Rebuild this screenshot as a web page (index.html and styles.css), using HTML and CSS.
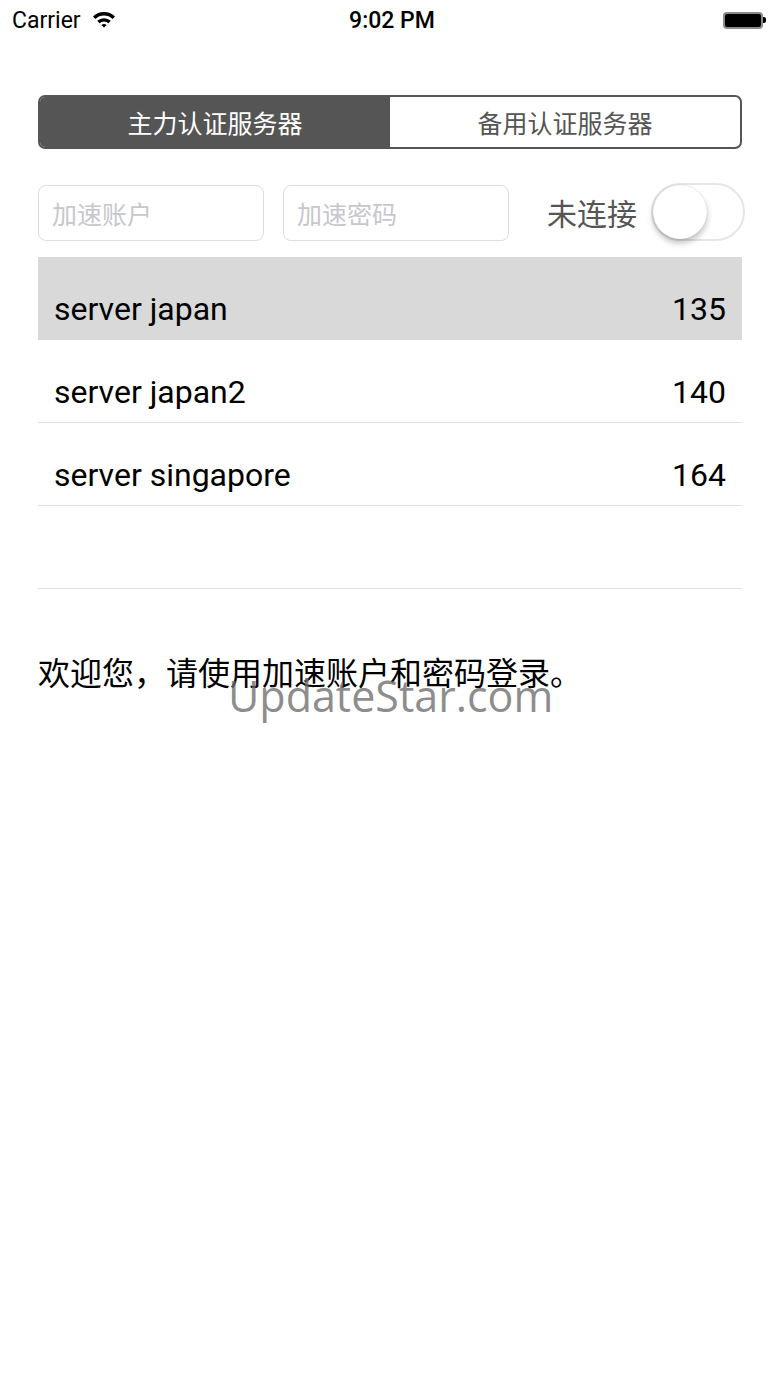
FILE: index.html
```html
<!DOCTYPE html>
<html lang="zh">
<head>
    <meta charset="UTF-8">
    <meta name="viewport" content="width=device-width, initial-scale=1.0">
    <title>加速</title>
    <link rel="stylesheet" href="styles.css">
</head>
<body>

    <div class="status-bar">
        <div class="status-left">
            <span>Carrier</span>
            <svg class="wifi" width="24" height="18" viewBox="0 0 24 18">
                <path d="M1 6.5 A16 16 0 0 1 23 6.5 L20.6 9 A12.6 12.6 0 0 0 3.4 9 Z" fill="#000"/>
                <path d="M5.2 10.8 A10 10 0 0 1 18.8 10.8 L16.4 13.2 A6.6 6.6 0 0 0 7.6 13.2 Z" fill="#000"/>
                <path d="M9.4 15 A4 4 0 0 1 14.6 15 L12 17.6 Z" fill="#000"/>
            </svg>
        </div>
        <div class="status-time">9:02 PM</div>
        <div class="status-right">
            <div class="battery"></div>
            <div class="battery-nub"></div>
        </div>
    </div>

    <div class="container">
        <div class="segmented">
            <div class="segment active">主力认证服务器</div>
            <div class="segment">备用认证服务器</div>
        </div>

        <div class="login-row">
            <input type="text" class="field" placeholder="加速账户">
            <input type="password" class="field" placeholder="加速密码">
            <span class="conn-label">未连接</span>
            <div class="switch"><div class="knob"></div></div>
        </div>

        <div class="server-list">
            <div class="server selected"><span>server japan</span><span>135</span></div>
            <div class="server"><span>server japan2</span><span>140</span></div>
            <div class="server"><span>server singapore</span><span>164</span></div>
            <div class="server empty"></div>
        </div>

        <div class="welcome-box">
            <p class="welcome">欢迎您，请使用加速账户和密码登录。</p>
            <div class="watermark">UpdateStar.com</div>
        </div>
    </div>

</body>
</html>
```

FILE: styles.css
```css
body {
    margin: 0;
    padding: 0;
    background: #fff;
    font-family: Roboto, "Noto Sans CJK SC", sans-serif;
    color: #000;
    min-height: 1387px;
}
.status-bar {
    height: 40px;
    padding: 0 14px 0 12px;
    display: flex;
    align-items: center;
    justify-content: space-between;
    font-size: 23px;
}
.status-left {
    display: flex;
    align-items: center;
    gap: 11px;
    width: 140px;
}
.wifi {
    margin-top: -2px;
}
.status-time {
    font-weight: 500;
    font-size: 23px;
    margin-left: 6px;
}
.status-right {
    width: 140px;
    display: flex;
    justify-content: flex-end;
    align-items: center;
}
.battery {
    width: 36px;
    height: 13px;
    border: 2px solid #8a8a8a;
    border-radius: 4px;
    background: #000;
}
.battery-nub {
    width: 3px;
    height: 6px;
    background: #000;
    border-radius: 0 2px 2px 0;
}
.container {
    padding: 0 38px;
}
.segmented {
    margin-top: 55px;
    height: 54px;
    display: flex;
    border: 2px solid #555;
    border-radius: 7px;
    overflow: hidden;
    box-sizing: border-box;
}
.segment {
    flex: 1;
    display: flex;
    align-items: center;
    justify-content: center;
    font-size: 25px;
    color: #555;
    font-family: "Noto Sans CJK SC", sans-serif;
}
.segment.active {
    background: #555;
    color: #fff;
}
.login-row {
    margin-top: 34px;
    height: 58px;
    display: flex;
    align-items: center;
}
.field {
    flex: none;
    width: 226px;
    height: 56px;
    box-sizing: border-box;
    border: 1px solid #dedede;
    border-radius: 8px;
    padding: 0 13px;
    font-size: 25px;
    font-family: "Noto Sans CJK SC", sans-serif;
    margin: 2px 19px 0 0;
    outline: none;
}
.field::placeholder {
    color: #c7c7cd;
}
.conn-label {
    margin-left: 19px;
    font-size: 30px;
    color: #555;
    white-space: nowrap;
    font-family: "Noto Sans CJK SC", sans-serif;
}
.switch {
    flex: none;
    margin-left: 14px;
    width: 94px;
    height: 58px;
    box-sizing: border-box;
    border: 2px solid #e6e6e6;
    border-radius: 29px;
    display: flex;
    align-items: center;
}
.knob {
    width: 54px;
    height: 54px;
    border-radius: 50%;
    background: #fff;
    box-shadow: 0 4px 6px rgba(0,0,0,0.25), 0 0 1px rgba(0,0,0,0.2);
}
.server-list {
    margin-top: 16px;
}
.server {
    height: 83px;
    box-sizing: border-box;
    padding: 22px 16px 0;
    display: flex;
    align-items: center;
    justify-content: space-between;
    font-size: 32px;
    border-bottom: 1px solid #e0e0e0;
}
.server.selected {
    background: #d9d9d9;
    border-bottom-color: #d9d9d9;
}
.welcome-box {
    position: relative;
}
.welcome {
    margin: 59px 0 0;
    font-size: 32px;
    font-family: "Noto Sans CJK SC", sans-serif;
}
.watermark {
    position: absolute;
    left: 190px;
    top: 22px;
    font-size: 43px;
    line-height: 1.2;
    color: rgba(110,110,110,0.8);
    font-family: "Open Sans", sans-serif;
}
```
